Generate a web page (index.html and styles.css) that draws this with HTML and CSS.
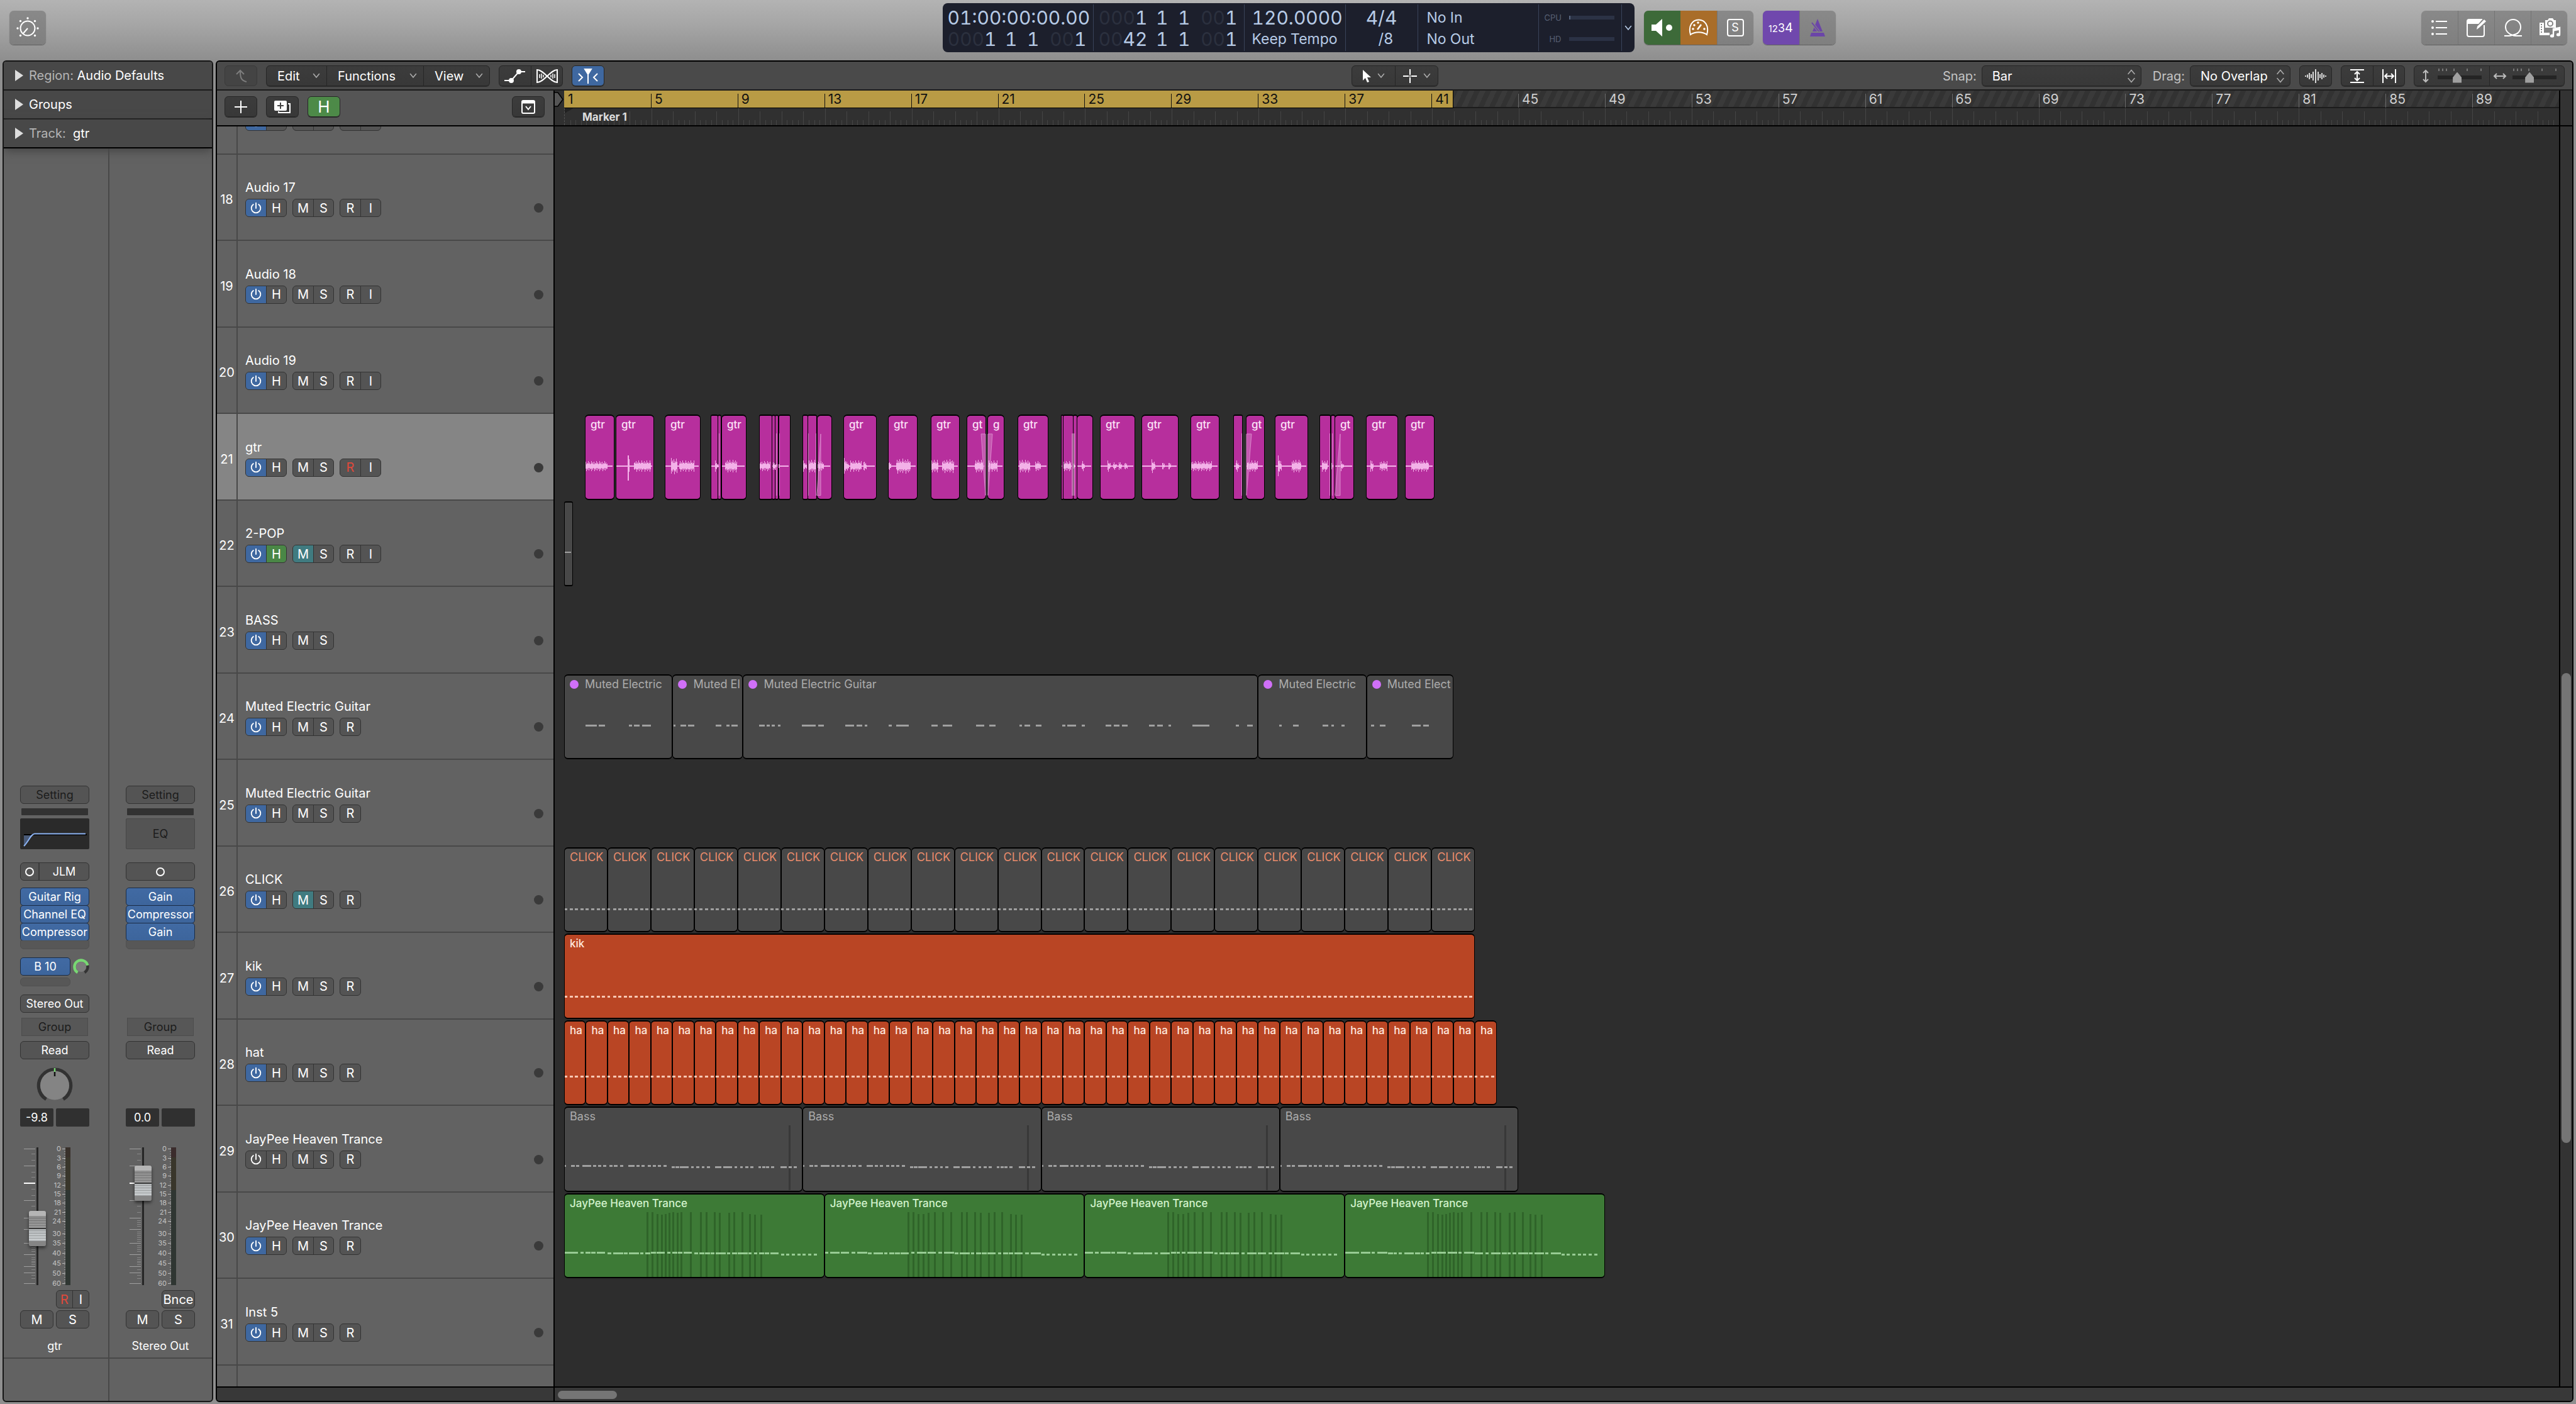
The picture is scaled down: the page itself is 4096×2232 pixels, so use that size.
FILE: index.html
```html
<!DOCTYPE html>
<html lang="en">
<head>
<meta charset="utf-8">
<title>Tracks</title>
<link rel="stylesheet" href="styles.css">
</head>
<body>
<svg class="defs" aria-hidden="true">
  <symbol id="power" viewBox="0 0 18 18"><path d="M9 1.500V9M5.200 3.600a6.600 6.600 0 1 0 7.600 0" fill="none" stroke="currentColor" stroke-width="1.700" stroke-linecap="round"/></symbol>
  <symbol id="chevron" viewBox="0 0 12 9"><path d="M1.500 1.500 6 7l4.500-5.500" fill="none" stroke="currentColor" stroke-width="1.600" stroke-linecap="round"/></symbol>
  <symbol id="updown" viewBox="0 0 14 22"><path d="M2 7.500 7 1.500l5 6M2 14.500l5 6 5-6" fill="none" stroke="currentColor" stroke-width="1.600" stroke-linecap="round"/></symbol>
</svg>

<header class="control-bar">
  <button class="glass single" aria-label="Smart Controls">
    <svg width="40" height="40" viewBox="0 0 40 40" fill="none" stroke="#fff" stroke-width="2"><circle cx="20" cy="21" r="11.500"/><path d="m20 21-7 8"/><g fill="#fff" stroke="none"><circle cx="20" cy="5" r="1.700"/><circle cx="8.500" cy="9.500" r="1.700"/><circle cx="31.500" cy="9.500" r="1.700"/><circle cx="4" cy="21" r="1.700"/><circle cx="36" cy="21" r="1.700"/><circle cx="8.500" cy="32.500" r="1.700"/><circle cx="31.500" cy="32.500" r="1.700"/></g></svg>
  </button>

  <section class="lcd" aria-label="Display">
    <div class="lcd-cell time"><b>01:00:00:00.00</b><p class="position"><span><i>000</i>1</span><span>1</span><span>1</span><span><i>00</i>1</span></p></div>
    <div class="lcd-cell locators"><p class="position"><span><i>000</i>1</span><span>1</span><span>1</span><span><i>00</i>1</span></p><p class="position"><span><i>00</i>42</span><span>1</span><span>1</span><span><i>00</i>1</span></p></div>
    <div class="lcd-cell tempo"><b>120.0000</b><span>Keep Tempo</span></div>
    <div class="lcd-cell meter"><b>4/4</b><span>/8</span></div>
    <div class="lcd-cell midi"><span>No In</span><span>No Out</span></div>
    <div class="lcd-cell load"><p><span>CPU</span><i class="load-bar active"></i></p><p><span>HD</span><i class="load-bar"></i></p></div>
    <button class="lcd-more" aria-label="Display mode"><svg width="12" height="9"><use href="#chevron"/></svg></button>
  </section>

  <div class="bar-right">
    <div class="modes">
      <div class="glass">
        <button class="green" aria-label="Audition"><svg width="36" height="32" viewBox="0 0 36 32" fill="#fff"><path d="M1 11h7L18 2v28L8 21H1z"/><circle cx="29" cy="16" r="5"/></svg></button>
        <button class="orange" aria-label="Tuner"><svg width="32" height="30" viewBox="0 0 32 30" fill="none" stroke="#fff" stroke-width="2"><path d="M3 26C-1 12 6 2.500 16 2.500S33 12 29 26c-7-5-19-5-26 0Z"/><path d="m14 18 6-8" stroke-width="2.600"/><g fill="#fff" stroke="none"><circle cx="7" cy="17" r="1.800"/><circle cx="9" cy="11" r="1.800"/><circle cx="15" cy="7" r="1.800"/><circle cx="25" cy="17" r="1.800"/></g></svg></button>
        <button aria-label="Solo"><span class="boxed">S</span></button>
      </div>
      <div class="glass">
        <button class="purple count" aria-label="Count-in"><span class="n1">1</span><span class="n2">2</span><span class="n3">3</span><span class="n4">4</span></button>
        <button aria-label="Metronome"><svg width="28" height="30" viewBox="0 0 28 30"><path d="M14 1 22 21H6z" fill="#6b45a8"/><path d="m5 7 11 14" stroke="#858585" stroke-width="4"/><path d="m5 7 11 14" stroke="#6b45a8" stroke-width="2"/><path d="M4 23h20l2 6H2z" fill="#6b45a8"/></svg></button>
      </div>
    </div>
    <div class="glass views">
      <button aria-label="List Editors"><svg width="28" height="28" viewBox="0 0 28 28" fill="#fff"><circle cx="3" cy="4" r="2"/><circle cx="3" cy="14" r="2"/><circle cx="3" cy="24" r="2"/><path d="M8 3h18v2H8zM8 13h18v2H8zM8 23h18v2H8z"/></svg></button>
      <button aria-label="Note Pads"><svg width="34" height="32" viewBox="0 0 34 32"><path d="M26 3H5a3 3 0 0 0-3 3v21a3 3 0 0 0 3 3h21a3 3 0 0 0 3-3V12" fill="none" stroke="#fff" stroke-width="2"/><path d="M3 4h22l-5 6H3z" fill="#fff"/><path d="m17 19 1-5L29 3l3 3-11 10z" fill="#fff"/></svg></button>
      <button aria-label="Loop Browser"><svg width="32" height="30" viewBox="0 0 32 30" fill="none" stroke="#fff" stroke-width="2"><path d="M2 28h7c3 0 5-1 7-1.500C22 26 28 21 28 14A12 12 0 0 0 4 14c0 7 6 11 10 12.500 3 1.500 5 1.500 7 1.500h9" /></svg></button>
      <button aria-label="Browsers"><svg width="36" height="34" viewBox="0 0 36 34"><path d="M3 9h6v16h9v4H2V9zM4 11v2h2v-2zm0 4v2h2v-2zm0 4v2h2v-2zm0 4v2h2v-2z" fill="#fff" fill-rule="evenodd"/><path d="M11 5h4l2-3h6l2 3h3v12H11z" fill="#fff"/><circle cx="19" cy="10.500" r="4" fill="none" stroke="#858585" stroke-width="2"/><path d="M24 29V19l10-2v10M24 21.500l10-2" fill="none" stroke="#fff" stroke-width="2.400"/><ellipse cx="22" cy="30" rx="3.200" ry="2.600" fill="#fff"/><ellipse cx="32" cy="28" rx="3.200" ry="2.600" fill="#fff"/></svg></button>
    </div>
  </div>
</header>

<div class="workspace">
  <aside class="inspector">
    <button class="section-head"><i class="tri"></i><span>Region:</span> Audio Defaults</button>
    <button class="section-head"><i class="tri"></i>Groups</button>
    <button class="section-head last"><i class="tri"></i><span>Track:</span> &nbsp;gtr</button>
    <div class="strips">
      <section class="strip">
        <div class="strip-body">
          <button class="pill off">Setting</button>
          <i class="gain"></i>
          <button class="eq curve" aria-label="EQ"><svg width="110" height="49" viewBox="0 0 110 49"><path d="M6 26h100" stroke="#000" stroke-width="2"/><path d="M6 27h12L6 44z" fill="#4a5b78"/><path d="M6 44C14 36 17 25 23 24.500H104" fill="none" stroke="#8db4f4" stroke-width="2"/></svg></button>
          <div class="pill input"><button aria-label="Format"><i class="ring"></i></button><button>JLM</button></div>
          <div class="inserts"><button>Guitar Rig</button><button>Channel EQ</button><button>Compressor</button><i></i></div>
          <div class="sends"><button class="send">B 10</button><svg width="26" height="26" viewBox="0 0 26 26"><path d="M23.200 10.500A10.500 10.500 0 0 1 18.500 22" fill="none" stroke="#333" stroke-width="4.500"/><path d="M7.500 22A10.500 10.500 0 1 1 23.200 10.800" fill="none" stroke="#78d873" stroke-width="4.500"/><circle cx="13" cy="13" r="8" fill="#7c7c7c"/></svg><i></i></div>
          <button class="pill out">Stereo Out</button>
          <button class="group">Group</button>
          <button class="pill mode">Read</button>
          <div class="pan"><svg width="58" height="56" viewBox="0 0 58 56"><path d="M15.500 51.500A25.500 25.500 0 1 1 42.500 51.500" fill="none" stroke="#323232" stroke-width="5.500"/><circle cx="29" cy="29.500" r="23" fill="#848484"/><path d="M29 2v6" stroke="#78d873" stroke-width="2.500"/><path d="M29 8v7" stroke="#111" stroke-width="2.500"/></svg></div>
          <div class="values"><output>-9.8</output><output></output></div>
          <div class="fader" data-level="38" data-name="gtr volume" data-tip="#38302a"></div>
          <div class="row rec"><div class="pill split"><button class="red">R</button><button>I</button></div></div>
          <div class="row ms"><button class="pill">M</button><button class="pill">S</button></div>
          <p class="strip-name">gtr</p>
        </div>
        <div class="strip-foot"></div>
      </section>
      <section class="strip">
        <div class="strip-body">
          <button class="pill off">Setting</button>
          <i class="gain"></i>
          <button class="eq">EQ</button>
          <button class="pill input" aria-label="Stereo format"><i class="ring"></i></button>
          <div class="inserts"><button>Gain</button><button>Compressor</button><button>Gain</button><i></i></div>
          <div class="sends"></div>
          <div class="out"></div>
          <button class="group">Group</button>
          <button class="pill mode">Read</button>
          <div class="pan"></div>
          <div class="values"><output>0.0</output><output></output></div>
          <div class="fader" data-level="82" data-name="Stereo Out volume" data-tip="#3b2c2c"></div>
          <div class="row rec"><button class="pill">Bnce</button></div>
          <div class="row ms"><button class="pill">M</button><button class="pill">S</button></div>
          <p class="strip-name">Stereo Out</p>
        </div>
        <div class="strip-foot"></div>
      </section>
    </div>
  </aside>

  <main class="tracks-window">
    <div class="menu-bar">
      <div class="cluster">
        <div class="ctl faint"><button class="icon" aria-label="Back"><svg width="22" height="24" viewBox="0 0 22 24" fill="none" stroke="#7d7d7d" stroke-width="2"><path d="M4 9 10 3l6 6M10 4c0 10 1 15 10 17"/></svg></button></div>
        <div class="ctl menus"><button class="edit">Edit <svg width="12" height="9"><use href="#chevron"/></svg></button><button class="functions">Functions <svg width="12" height="9"><use href="#chevron"/></svg></button><button class="view">View <svg width="12" height="9"><use href="#chevron"/></svg></button></div>
        <div class="ctl">
          <button class="icon" aria-label="Automation"><svg width="38" height="24" viewBox="0 0 38 24" fill="#fff" stroke="#fff" stroke-width="2"><path d="M2 19h11L25 5h10" fill="none"/><circle cx="13" cy="19" r="3"/><circle cx="25" cy="5" r="3"/></svg></button>
          <button class="icon" aria-label="Flex"><svg width="38" height="24" viewBox="0 0 38 24" fill="none" stroke="#fff" stroke-width="2"><path d="M3 2C14 2 24 22 35 22V2C24 2 14 22 3 22z"/><path d="M7 9v6M10 8v8M13 10v4M31 9v6M28 8v8M25 10v4" stroke-width="1.500"/></svg></button>
        </div>
        <div class="ctl"><button class="icon blue" aria-label="Catch Playhead"><svg width="36" height="26" viewBox="0 0 36 26" fill="none" stroke="#fff" stroke-width="2"><path d="M13 2h10l-5 8z" fill="#fff"/><path d="M18 8v17M3 9l6 6-6 6M33 9l-6 6 6 6"/></svg></button></div>
      </div>
      <div class="ctl">
        <button class="tool" aria-label="Pointer Tool"><svg width="16" height="22" viewBox="0 0 16 22" fill="#fff"><path d="M2 1v17l4-4 3 7 3-1-3-7h6z"/></svg><svg class="dim" width="12" height="9"><use href="#chevron"/></svg></button>
        <button class="tool" aria-label="Marquee Tool"><svg width="24" height="24" viewBox="0 0 24 24" stroke="#fff" stroke-width="2"><path d="M12 1v9M12 14v9M1 12h9M14 12h9M11 12h2"/></svg><svg class="dim" width="12" height="9"><use href="#chevron"/></svg></button>
      </div>
      <div class="cluster end">
        <label for="snap">Snap:</label>
        <div class="ctl pick snap"><select id="snap"><option>Bar</option></select><svg width="14" height="22"><use href="#updown"/></svg></div>
        <label for="drag" class="drag-label">Drag:</label>
        <div class="ctl pick drag"><select id="drag"><option>No Overlap</option></select><svg width="14" height="22"><use href="#updown"/></svg></div>
        <div class="ctl"><button class="icon" aria-label="Waveform Zoom"><svg width="36" height="24" viewBox="0 0 36 24" stroke="#fff" stroke-width="1.600"><path d="M2 11v2M5 9.500v5M8 7v10M11 9v6M14 5v14M18 1v22M22 5v14M25 9v6M28 7v10M31 9.500v5M34 11v2"/></svg></button></div>
        <div class="ctl">
          <button class="icon" aria-label="Fit Vertically"><svg width="24" height="24" viewBox="0 0 24 24" fill="none" stroke="#fff" stroke-width="2"><path d="M1 2h22M1 22h22M12 5v14M8 9l4-4 4 4M8 15l4 4 4-4"/></svg></button>
          <button class="icon" aria-label="Fit Horizontally"><svg width="24" height="24" viewBox="0 0 24 24" fill="none" stroke="#fff" stroke-width="2"><path d="M2 1v22M22 1v22M5 12h14M9 8l-4 4 4 4M15 8l4 4-4 4"/></svg></button>
        </div>
        <div class="ctl">
          <label class="zoom" aria-label="Vertical Zoom"><svg width="12" height="22" viewBox="0 0 12 22" fill="none" stroke="#bbb" stroke-width="2"><path d="M6 2v18M2 6l4-4 4 4M2 16l4 4 4-4"/></svg><span class="zoom-range"><svg width="70" height="4" viewBox="0 0 70 4" stroke="#777" stroke-width="2"><path d="M2 0v4M8 0v4M14 0v4M26 0v4M47 0v4M69 0v4"/></svg><input type="range" min="0" max="100" value="43"></span></label>
          <label class="zoom" aria-label="Horizontal Zoom"><svg width="22" height="12" viewBox="0 0 22 12" fill="none" stroke="#bbb" stroke-width="2"><path d="M2 6h18M6 2 2 6l4 4M16 2l4 4-4 4"/></svg><span class="zoom-range"><svg width="70" height="4" viewBox="0 0 70 4" stroke="#777" stroke-width="2"><path d="M2 0v4M8 0v4M14 0v4M26 0v4M47 0v4M69 0v4"/></svg><input type="range" min="0" max="100" value="36"></span></label>
        </div>
      </div>
    </div>

    <div class="head-bar">
      <div class="ctl"><button class="icon" aria-label="New Track"><svg width="20" height="20" viewBox="0 0 20 20" stroke="#fff" stroke-width="2"><path d="M10 0v20M0 10h20"/></svg></button></div>
      <div class="ctl"><button class="icon" aria-label="Duplicate Track"><svg width="28" height="22" viewBox="0 0 28 22"><path d="M23 6h3v14H8v-2" fill="none" stroke="#fff" stroke-width="2"/><rect x="1" y="1" width="20" height="16" rx="2" fill="#fff"/><path d="M11 4v10M6 9h10" stroke="#444" stroke-width="2"/></svg></button></div>
      <div class="ctl"><button class="icon hide">H</button></div>
      <div class="ctl config"><button class="icon" aria-label="Track Header Setup"><svg width="24" height="22" viewBox="0 0 24 22" fill="none" stroke="#fff" stroke-width="2"><rect x="2" y="1" width="20" height="20" rx="2"/><path d="M3 3.500h18" stroke-width="4"/><path d="m8 10 4 5 4-5"/></svg></button></div>
    </div>

    <div class="ruler">
      <svg class="playhead" width="14" height="24" viewBox="0 0 14 24"><path d="M-2 1h7l8 11-8 11h-7z" fill="#555" stroke="#000" stroke-width="1.500"/></svg>
      <div class="bars" id="bars"><div class="cycle" id="cycle"></div></div>
      <div class="markers" id="markers"><span>Marker 1</span></div>
    </div>
    <div class="ruler-end"></div>

    <div class="headers" id="headers"></div>
    <div class="lanes" id="lanes"></div>
    <div class="v-scroll"><i></i></div>
    <div class="scroll-corner"></div>
    <div class="h-scroll"><i></i></div>
  </main>
</div>
<script src="app.js"></script>
</body>
</html>
```
FILE: styles.css
```css
* { box-sizing: border-box; margin: 0; padding: 0; }
html, body { height: 100%; }
body {
  display: flex; flex-direction: column; overflow: hidden;
  background: #8f8f8f; color: #fff;
  font: 400 20px/24px Inter, "Liberation Sans", sans-serif;
}
button, select, input { font: inherit; color: inherit; border: 0; background: none; }
button { display: flex; align-items: center; justify-content: center; }
i { font-style: normal; }
svg { display: block; flex: none; }
.defs { position: absolute; width: 0; height: 0; }

/* Control bar */
.control-bar {
  flex: none; height: 96px; padding: 0 14px 8px 15px;
  display: grid; grid-template-columns: 1fr auto 1fr; align-items: center;
  background: linear-gradient(#b3b3b3, #a6a6a6 40%, #8e8e8e);
}
.glass {
  display: flex; height: 54px; border-radius: 7px; overflow: hidden;
  background: linear-gradient(#898989, #7f7f7f); box-shadow: 0 1px 1px #5c5c5c;
}
.glass.single, .glass button { width: 58px; }
.glass button + button { border-left: 1px solid #747474; }
.glass .green { background: #3d6a39; }
.glass .orange { background: #a96d29; border-color: #a96d29; }
.glass .purple { background: #7048ad; }
.boxed { width: 27px; height: 28px; border: 2px solid #fff; border-radius: 4px; font-size: 18px; line-height: 24px; }
.count { align-items: baseline; line-height: 54px; }
.n1 { font-size: 14px; } .n2 { font-size: 15px; } .n3 { font-size: 18px; } .n4 { font-size: 20px; }
.bar-right, .modes { display: flex; }
.bar-right { justify-content: space-between; padding-left: 15px; }
.modes { gap: 15px; }
.lcd {
  display: flex; height: 78px; border-radius: 8px; padding: 2px 0;
  background: #1c1f2c; color: #b7cbe6; font-size: 30px; font-variant-numeric: tabular-nums;
}
.lcd-cell {
  display: flex; flex-direction: column; justify-content: space-between;
  border-right: 1px solid #39435a; padding: 5px 0 3px; line-height: 32px; white-space: nowrap;
}
.lcd b { font-weight: 400; }
.lcd-cell i { color: #2b303e; }
.time, .locators { width: 240px; padding-left: 8px; }
.position { display: grid; grid-template-columns: 78px 33px 35px 75px; text-align: right; }
.tempo { width: 161px; padding-left: 12px; }
.tempo span, .midi span { font-size: 23px; }
.meter span { font-size: 24px; }
.meter { width: 115px; align-items: center; }
.meter span { padding-left: 14px; }
.midi { width: 192px; padding-left: 14px; }
.load { width: 132px; padding: 5px 11px 3px 9px; font-size: 13px; color: #586074; }
.load p { display: flex; align-items: center; justify-content: flex-end; gap: 12px; }
.lcd-cell .load-bar { width: 72px; height: 6px; background: #2b3245; }
.lcd-cell .load-bar.active { border-left: 2px solid #586680; }
.lcd-more { width: 20px; }

/* Window frame */
.workspace { flex: 1; min-height: 0; display: flex; gap: 4px; padding: 0 4px 3px; }
.inspector { flex: none; width: 335px; border: 2px solid #161616; border-radius: 6px; overflow: hidden; display: flex; flex-direction: column; background: #626262; }
.section-head {
  flex: none; width: 100%; height: 46px; padding: 0 18px; justify-content: flex-start;
  background: #484848; border-bottom: 2px solid #1b1b1b; white-space: pre;
}
.section-head.last { border-color: #000; box-shadow: 0 4px 14px #444; }
.section-head span { color: #b5b5b5; }
.tri { border-left: 13px solid #ddd; border-top: 9px solid transparent; border-bottom: 9px solid transparent; margin-right: 9px; }

/* Channel strips */
.strips { flex: 1; display: flex; }
.strip { width: 166px; display: flex; flex-direction: column; justify-content: flex-end; }
.strip + .strip { width: auto; flex: 1; border-left: 2px solid #484848; }
.strip-body { width: 110px; margin: 0 0 6px 26px; display: flex; flex-direction: column; font-size: 18px; }
.strip-body > * { flex: none; }
.strip-foot { height: 69px; border-top: 2px solid #484848; }
.pill, .send { height: 29px; border: 1px solid #333; border-radius: 6px; background: #545454; white-space: nowrap; }
.off, .group, .eq { color: #1c1c1c; }
.gain { height: 11px; margin: 7px 2px 0; background: #323232; border-radius: 1px; }
.eq { height: 49px; margin-top: 5px; background: #545454; border: 1px solid #474747; border-radius: 2px; }
.eq.curve { background: #2a2a2a; border: 0; }
.input { margin-top: 21px; display: flex; }
.input button { height: 100%; flex: 1; }
.input button:first-child { flex: none; width: 30px; border-right: 2px solid #3b3b3b; }
.ring { width: 14px; height: 14px; border: 2px solid #fff; border-radius: 50%; }
.inserts { height: 96px; margin-top: 11px; }
.inserts button, .send { width: 100%; background: linear-gradient(#416aa3, #3d659c); border: 1px solid #1a2b44; border-radius: 5px; white-space: nowrap; }
.inserts button { height: 29px; margin-bottom: -1px; }
.inserts i, .sends i { display: block; height: 14px; border: 1px solid #505050; border-radius: 0 0 6px 6px; background: #575757; }
.sends { height: 46px; margin-top: 15px; display: grid; grid-template-columns: 80px 26px; column-gap: 4px; row-gap: 3px; align-items: center; }
.sends i { border-radius: 6px; }
.out { height: 29px; margin-top: 13px; }
.group { height: 29px; margin: 8px 2px 0; background: #575757; border: 1px solid #4c4c4c; }
.mode { margin-top: 8px; }
.pan { height: 53px; margin-top: 12px; display: flex; justify-content: center; }
.values { margin-top: 13px; display: flex; gap: 4px; }
.values output { flex: 1; height: 29px; line-height: 29px; text-align: center; background: #303030; border-radius: 2px; }
.fader { position: relative; height: 219px; margin-top: 33px; font-size: 11px; }
.fader svg { overflow: visible; }
.fader text { fill: #c4c4c4; text-anchor: end; }
.fader input {
  position: absolute; left: 14px; top: 0; width: 27px; height: 219px;
  appearance: none; writing-mode: vertical-lr; direction: rtl;
}
.fader input::-webkit-slider-thumb {
  appearance: none; width: 27px; height: 56px; border-radius: 3px;
  background:
    linear-gradient(transparent 27px, #3a3a3a 27px 29px, transparent 29px),
    linear-gradient(#b5b5b5 8px, transparent 8px 48px, #858585 48px),
    repeating-linear-gradient(#0000 0 3px, #0003 3px 4px),
    linear-gradient(#888, #999 48%, #b8bcbe 52%, #d0d4d6);
  box-shadow: 0 3px 5px #0008;
}
.row { display: flex; gap: 4px; }
.row .pill { width: 53px; font-size: 20px; }
.rec { margin-top: 8px; justify-content: flex-end; }
.split { display: flex; }
.split button { flex: 1; height: 100%; }
.split button + button { border-left: 1px solid #333; }
.ms { margin-top: 3px; }
.strip-name { margin-top: 16px; text-align: center; white-space: nowrap; }
.red { color: #e0493b; }

/* Tracks window */
.tracks-window {
  flex: 1; min-width: 0; border: 2px solid #000; border-radius: 6px; overflow: hidden; background: #2d2d2d;
  display: grid; grid-template-columns: 537px 1fr 21px; grid-template-rows: 46px 57px minmax(0, 1fr) 23px;
}
.menu-bar {
  grid-column: 1 / -1; display: grid; grid-template-columns: 1fr auto 1fr; align-items: center;
  padding: 1px 12px 0; background: #4a4a4a; border-bottom: 2px solid #1b1b1b;
}
.cluster { display: flex; align-items: center; gap: 14px; }
.cluster.end { justify-content: flex-end; }
.cluster.end label { color: #c4c4c4; }
.cluster .pick { margin-left: -6px; }
.cluster .drag-label { margin-left: 4px; }
.ctl {
  display: flex; height: 33px; border-radius: 6px; overflow: hidden; border: 1px solid #262626;
  background: linear-gradient(#3c3c3c, #383838); box-shadow: 0 1px 0 #2b2b2b;
}
.ctl > * + * { border-left: 1px solid #262626; }
.ctl.faint { background: #444; border-color: #3a3a3a; box-shadow: none; }
.icon { width: 50px; }
.menus button { justify-content: space-between; padding: 0 10px 0 17px; }
.edit { width: 95px; }
.functions { width: 154px; }
.view { width: 105px; }
.menus svg, .dim, .pick svg { color: #aaa; }
.blue { background: #3f68a0; }
.tool { width: 68px; gap: 9px; }
.pick { position: relative; }
.pick select { width: 100%; height: 31px; padding-left: 16px; appearance: none; }
.ctl.pick svg { position: absolute; right: 8px; top: 5px; border: 0; }
.snap { width: 254px; }
.drag { width: 160px; }
.zoom { display: flex; align-items: center; justify-content: space-between; width: 119px; padding: 0 12px; }
.zoom:last-child { padding-left: 5px; }
.zoom-range { width: 70px; }
.zoom-range svg { margin-bottom: 1px; }
.zoom input { display: block; width: 70px; height: 18px; appearance: none; background: linear-gradient(#0000 6px, #242424 6px 12px, #0000 12px); }
.zoom input::-webkit-slider-thumb { appearance: none; width: 14px; height: 17px; background: #a0a0a0; clip-path: polygon(50% 0, 100% 50%, 100% 100%, 0 100%, 0 50%); }

.head-bar {
  display: flex; align-items: center; gap: 14px; padding: 0 14px 4px 12px;
  background: #555; border-right: 2px solid #000; border-bottom: 2px solid #000;
}
.config { margin-left: auto; }
.hide { background: #4d8a48; font-size: 26px; }
.ruler { position: relative; padding-left: 15px; background: #303030; border-bottom: 2px solid #000; overflow: hidden; }
.ruler-end, .v-scroll { border-left: 2px solid #000; background: #333; }
.ruler-end { border-bottom: 2px solid #000; }
.playhead { position: absolute; left: 0; top: 2px; }
.bars {
  position: relative; height: 28px; border-bottom: 2px solid #1c1c1c;
  background: repeating-linear-gradient(115deg, #323232 0 8px, #3a3a3a 8px 16px);
}
.cycle { position: absolute; top: 0; left: 0; height: 28px; background: #b99b45; border-bottom: 1px solid #000; border-right: 1px solid #000; }
.bar-no { position: absolute; top: 5px; height: 22px; padding-left: 5px; border-left: 1px solid #6a6a6a; color: #d0d0d0; font-size: 21px; line-height: 17px; }
.bar-no.in { color: #111; border-color: #111; }
.bar-no.in:nth-child(2) { border-color: transparent; }
.markers { position: relative; height: 27px; border-left: 1px dashed #555; }
.markers svg { position: absolute; inset: 0; width: 100%; height: 28px; }
.markers span { position: relative; display: block; padding: 2px 0 0 28px; font-size: 17px; font-weight: 700; color: #ddd; }

.headers, .lanes { display: grid; grid-template-rows: 446fr repeat(14, 1376fr) 330fr; min-height: 0; }
.headers { border-right: 2px solid #000; background: #626262; }
.track { min-height: 0; overflow: hidden; display: flex; align-items: flex-end; border-bottom: 2px solid #484848; }
.track.selected { background: #858585; }
.track:last-child { border-bottom: 0; }
.track-no { flex: none; align-self: stretch; width: 33px; display: flex; align-items: flex-end; justify-content: center; padding-bottom: 52px; border-right: 2px solid #484848; }
.track-main { padding: 0 0 36px 12px; }
.track-name { margin-bottom: 6px; white-space: nowrap; }
.groups { display: flex; gap: 9px; }
.seg { display: flex; height: 29px; border: 1px solid #333; border-radius: 6px; overflow: hidden; background: #545454; }
.seg button { width: 32px; height: 100%; }
.seg button + button { border-left: 1px solid #333; }
.seg .on-power { background: #3f68a0; }
.seg .on-hide { background: #4a8746; }
.seg .on-mute { background: #407b80; }
.dot { width: 15px; height: 15px; border-radius: 50%; background: #3a3a3a; margin: 0 16px 43px auto; }

/* Regions */
.lanes { padding-left: 15px; }
.lane { position: relative; min-height: 0; }
.clip {
  position: absolute; top: 1px; bottom: 1px; overflow: hidden; border: solid #000; border-width: 2px 1px;
  border-radius: 6px; padding: 4px 0 0 8px; font-size: 17px; line-height: 20px; white-space: nowrap;
  display: flex; align-items: flex-start; gap: 10px; font-weight: 500;
}
.clip.narrow { border-radius: 3px; padding: 0; }
.clip::before { display: none; content: ""; width: 14px; height: 14px; border-radius: 50%; background: #d070f8; margin-top: 3px; flex: none; }
.clip.guitar::before { display: block; }
.magenta { background: #b72f9d; color: #fbe0f6; }
.gray, .guitar { background: #484848; color: #acacac; font-size: 18px; font-weight: 400; }
.click { background: #484848; color: #ea8c6c; font-size: 18px; font-weight: 400; }
.orange-clip { background: #b94524; color: #ffe8de; }
.green-clip { background: #3d7a36; color: #d3f3cd; }
.lane svg { position: absolute; inset: 0; width: 100%; height: 100%; pointer-events: none; }

.v-scroll { position: relative; }
.v-scroll i { position: absolute; left: 2px; top: 43.4%; width: 15px; height: 37.3%; border-radius: 8px; background: #757575; }
.scroll-corner, .h-scroll { background: #383838; border-top: 2px solid #000; }
.scroll-corner { border-right: 2px solid #000; }
.h-scroll { grid-column: 2 / -1; padding: 5px 0 0 5px; }
.h-scroll i { display: block; width: 94px; height: 13px; border-radius: 7px; background: #757575; }
```
FILE: app.js
```js
// Timeline: 92 bars are visible; positions are in units, 3172 to the full width.
const BARS = 92, UNITS = 3172, BAR = UNITS / BARS;
const pct = u => (u / UNITS * 100) + '%';
const el = (tag, cls, parent, html) => {
  const e = document.createElement(tag);
  if (cls) e.className = cls;
  if (html !== undefined) e.innerHTML = html;
  parent.append(e);
  return e;
};
const rect = (x, y, w, h, fill) => `<rect x="${x}" y="${y}" width="${w}" height="${h}" fill="${fill}"/>`;

// Ruler
const bars = document.getElementById('bars');
document.getElementById('cycle').style.width = pct(41 * BAR);
for (let b = 1; b < 92; b += 4) {
  const n = el('span', 'bar-no' + (b < 42 ? ' in' : ''), bars, b);
  n.style.left = pct((b - 1) * BAR);
}
let ticks = '<path d="M0 8V0h14z" fill="#222"/>';
for (let i = 1; i < BARS * 4; i++) {
  const y = i % 16 === 0 ? 0 : i % 4 === 0 ? 5 : 19;
  ticks += rect(Math.round(i * BAR / 4), y, 1, 28 - y, '#454545');
}
document.getElementById('markers').insertAdjacentHTML('afterbegin',
  `<svg viewBox="0 0 ${UNITS} 28" preserveAspectRatio="none" shape-rendering="crispEdges">${ticks}</svg>`);

// Track headers: [number, name, buttons, active flags]; the first is scrolled almost out of view
const tracks = [
  [17, '', 'PHMSRI', 'P'], [18, 'Audio 17', 'PHMSRI', 'P'], [19, 'Audio 18', 'PHMSRI', 'P'],
  [20, 'Audio 19', 'PHMSRI', 'P'], [21, 'gtr', 'PHMSRI', 'PR'], [22, '2-POP', 'PHMSRI', 'PHM'],
  [23, 'BASS', 'PHMS', 'P'], [24, 'Muted Electric Guitar', 'PHMSR', 'P'],
  [25, 'Muted Electric Guitar', 'PHMSR', 'P'], [26, 'CLICK', 'PHMSR', 'PM'], [27, 'kik', 'PHMSR', 'P'],
  [28, 'hat', 'PHMSR', 'P'], [29, 'JayPee Heaven Trance', 'PHMSR', ''],
  [30, 'JayPee Heaven Trance', 'PHMSR', 'P'], [31, 'Inst 5', 'PHMSR', 'P'],
];
const onClass = { P: 'on-power', H: 'on-hide', M: 'on-mute', R: 'red' };
const headers = document.getElementById('headers');
const lanesEl = document.getElementById('lanes');
const lanes = {};
for (const [no, name, buttons, on] of tracks) {
  const t = el('article', 'track' + (no === 21 ? ' selected' : ''), headers);
  el('span', 'track-no', t, name ? no : '');
  const m = el('div', 'track-main', t);
  if (name) el('p', 'track-name', m, name);
  const g = el('div', 'groups', m);
  for (let i = 0; i < buttons.length; i += 2) {
    const seg = el('div', 'seg', g);
    for (const k of buttons.slice(i, i + 2)) {
      const b = el('button', on.includes(k) ? onClass[k] : '', seg,
        k === 'P' ? '<svg width="20" height="20"><use href="#power"/></svg>' : name ? k : '');
      if (k === 'P') b.setAttribute('aria-label', 'Track On');
    }
  }
  if (name) el('i', 'dot', t);
  lanes[no] = el('div', 'lane', lanesEl);
}
el('span', 'track-no', el('article', 'track', headers), '');
el('div', 'lane', lanesEl);

// Regions
function clip(no, a, b, cls, label) {
  const c = el('div', 'clip ' + cls + (b - a < 22 ? ' narrow' : ''), lanes[no], label || '');
  c.style.left = pct(a);
  c.style.width = pct(b - a);
}
function overlay(no, shapes) {
  lanes[no].insertAdjacentHTML('beforeend',
    `<svg viewBox="0 0 ${UNITS} 138" preserveAspectRatio="none" shape-rendering="crispEdges">${shapes}</svg>`);
}

const guitarTakes = [
  [33, 80, 'gtr'], [82, 143, 'gtr'], [160, 217, 'gtr'], [233, 245], [244, 250], [250, 290, 'gtr'],
  [310, 331], [330, 336], [335, 341], [341, 360], [379, 388], [387, 402], [402, 426],
  [444, 497, 'gtr'], [515, 562, 'gtr'], [583, 629, 'gtr'], [640, 671, 'gt'], [673, 700, 'g'],
  [721, 770, 'gtr'], [790, 794], [793, 810], [809, 816], [815, 841], [852, 908, 'gtr'],
  [918, 977, 'gtr'], [996, 1042, 'gtr'], [1064, 1079], [1084, 1114, 'gt'], [1130, 1183, 'gtr'],
  [1201, 1219], [1219, 1226], [1225, 1256, 'gt'], [1275, 1326, 'gtr'], [1337, 1384, 'gtr'],
];
const bursts = [
  [34, 69, 8], [111, 138, 9], [170, 180, 13], [183, 207, 9], [240, 245, 9], [256, 275, 10],
  [311, 328, 8], [332, 339, 8], [341, 344, 5], [380, 386, 9], [388, 400, 10], [403, 413, 8],
  [445, 453, 13], [455, 473, 9], [476, 481, 11], [516, 520, 10], [528, 551, 12], [584, 595, 10],
  [601, 620, 11], [653, 667, 10], [675, 689, 9], [724, 741, 10], [749, 758, 8], [794, 806, 8],
  [810, 813, 4], [823, 828, 11], [864, 869, 11], [873, 879, 8], [882, 887, 9], [891, 896, 8],
  [934, 940, 13], [951, 955, 9], [961, 965, 9], [997, 1030, 8], [1068, 1073, 12], [1086, 1103, 9],
  [1135, 1141, 17], [1157, 1172, 10], [1205, 1214, 9], [1220, 1223, 5], [1235, 1240, 8],
  [1282, 1287, 13], [1297, 1309, 8], [1347, 1375, 9],
];
const PINK = '#f3b1e8', jitter = [1, .5, .7, .4, .85, .4, .65, .45, .95, .5, .7, .4, .55];
let wave = '';
for (const [a, b, label] of guitarTakes) {
  clip(21, a, b, 'magenta', label);
  wave += rect(a + 1, 82, Math.max(b - a - 4, 1), 2, PINK);
}
for (const [a, b, amp] of bursts) {
  for (let x = a, k = a % 5; x < b; x++, k++) {
    const decay = b - a < 9 ? 1 - (x - a) / (b - a) * .7 : 1;
    const up = Math.round(amp * jitter[k % 13] * decay), down = Math.round(amp * jitter[(k + 8) % 13] * decay);
    wave += rect(x, 83 - up, 1, up + down, PINK);
  }
}
wave += rect(101, 66, 2, 40, PINK) + rect(103, 72, 1, 20, PINK);
for (const x of [246, 337, 342, 388, 400, 1077, 1217, 1221]) wave += rect(x, 31, 1, 99, '#d985cb');
wave += rect(807, 31, 5, 99, '#ffffff55');
for (const p of ['402,130 408,32 408,130', '663,32 670,32 670,130', '674,130 674,32 681,32', '1085,130 1085,32 1093,32', '1226,130 1234,32 1234,130'])
  wave += `<polygon points="${p}" fill="#ffffff33" stroke="#d985cb"/>`;
overlay(21, wave);

clip(22, 0, 14, 'gray');
overlay(22, rect(1, 81, 10, 2, '#a0a0a0'));

const NOTE = '#a0a0a0';
clip(24, 0, 5 * BAR, 'guitar', 'Muted Electric');
clip(24, 5 * BAR, 8.25 * BAR, 'guitar', 'Muted El');
clip(24, 8.25 * BAR, 32 * BAR, 'guitar', 'Muted Electric Guitar');
clip(24, 32 * BAR, 37 * BAR, 'guitar', 'Muted Electric');
clip(24, 37 * BAR, 41 * BAR, 'guitar', 'Muted Elect');
const riff = [
  34, 52, 55, 65, 103, 108, 111, 120, 124, 138, 174, 177, 185, 194, 197, 207, 241, 250, 258, 263, 266, 276,
  310, 319, 322, 327, 330, 335, 340, 344, 378, 400, 404, 413, 447, 461, 465, 474, 478, 482, 516, 521, 528, 548,
  584, 594, 602, 617, 655, 668, 676, 686, 724, 728, 732, 741, 750, 759, 792, 797, 800, 814, 823, 828,
  861, 870, 874, 883, 887, 896, 930, 939, 943, 952, 961, 965, 999, 1026, 1068, 1073, 1086, 1095,
  1137, 1141, 1159, 1168, 1206, 1215, 1220, 1224, 1236, 1241, 1283, 1288, 1297, 1306, 1348, 1362, 1366, 1375,
];
const pairs = (list, y, fill, shift = 0) => {
  let s = '';
  for (let i = 0; i < list.length; i += 2) s += rect(list[i] + shift, y, list[i + 1] - list[i], 3, fill);
  return s;
};
overlay(24, pairs(riff, 81, NOTE));

const pulse = (count, y, fill) => {
  let s = '';
  for (let i = 0; i < count * 4; i++) s += rect(Math.round(i * BAR / 4) + (i ? 0 : 1), y, i % 8 ? 5 : 4, 3, fill);
  return s;
};
for (let b = 0; b < 42; b += 2) clip(26, b * BAR, (b + 2) * BAR, 'click', 'CLICK');
overlay(26, pulse(42, 98, NOTE));
clip(27, 0, 42 * BAR, 'orange-clip', 'kik');
overlay(27, pulse(42, 100, '#f8c7b3'));
for (let b = 0; b < 43; b++) clip(28, b * BAR, (b + 1) * BAR, 'orange-clip', 'ha');
overlay(28, pulse(43, 89, '#f8c7b3'));

const bassHigh = [1, 3, 11, 17, 19, 24, 29, 43, 46, 51, 54, 59, 62, 67, 72, 77, 79, 85, 89, 94, 102, 112, 115, 120, 123, 128, 133, 138, 141, 146, 149, 154, 158, 163];
const bassLow = [171, 176, 177, 183, 184, 198, 202, 206, 210, 215, 219, 223, 227, 232, 240, 250, 253, 267, 271, 275, 280, 284, 288, 293, 296, 301, 309, 313, 315, 320, 321, 326, 329, 334, 344, 354, 357, 362, 365, 370];
let bass = '';
for (let i = 0; i < 4; i++) {
  const x = Math.round(i * 11 * BAR);
  clip(29, i * 11 * BAR, (i + 1) * 11 * BAR, 'gray', 'Bass');
  bass += rect(x + 357, 31, 3, 103, '#383838') + pairs(bassHigh, 94, NOTE, x) + pairs(bassLow, 96, NOTE, x);
}
overlay(29, bass);

// Controller bars as [x, top], then the melody in steps of a quarter bar
const sweepA = [[131, 31], [139, 31], [147, 34], [154, 35], [160, 34], [166, 32], [172, 31], [179, 32], [185, 31], [200, 31], [216, 31], [225, 31], [238, 31], [246, 32], [261, 32], [269, 31], [282, 31], [294, 34], [302, 35], [312, 35]];
const sweepB = [[132, 31], [140, 31], [148, 34], [156, 34], [164, 32], [174, 31], [187, 31], [200, 31], [217, 31], [225, 31], [238, 31], [247, 32], [260, 32], [269, 31], [281, 31], [295, 34], [303, 35], [312, 35]];
const widths = [8, 8, 5, 5, 8, 7, 8, 5, 6, 8, 8, 6, 9, 7, 5, 8];
let lead = '';
for (let i = 0; i < 4; i++) {
  const x = Math.round(i * 12 * BAR);
  clip(30, i * 12 * BAR, (i + 1) * 12 * BAR, 'green-clip', 'JayPee Heaven Trance');
  for (const [sx, top] of i % 3 ? sweepB : sweepA) lead += rect(x + sx, top, 3, 134 - top, '#2f6429');
  for (let s = 0; s < 47; s++) {
    const y = s < 8 ? 94 : s < 16 ? 95 : s < 24 ? 94 : s < 40 ? 95 : 97;
    lead += rect(x + Math.round(s * BAR / 4) + (s ? 0 : 1), y, s < 40 ? widths[(s + i * 3) % 16] : 5, 3, '#97cb93');
  }
}
overlay(30, lead);

// Channel faders with their scales
const long = [2, 29, 84, 112, 130, 152, 170, 189, 199, 216];
const short = [10, 20, 39, 47, 66, 76, 93, 103, 116, 119, 122, 125, 134, 137, 140, 143, 146, 149, 156, 159, 162, 165, 175, 178, 181, 183, 186, 194, 203, 208];
const scale = [[0, 2], [3, 17], [6, 31], [9, 45], [12, 60], [15, 74], [18, 88], [21, 103], [24, 117], [30, 137], [35, 152], [40, 168], [45, 184], [50, 200], [60, 216]];
for (const f of document.querySelectorAll('.fader')) {
  let s = '';
  for (const y of long) s += rect(6, y, 18, 1, '#a0a0a0');
  for (const y of short) s += rect(18, y, 6, 1, '#888');
  s += rect(6, 56, 18, 2, '#fff') + rect(26, 0, 3, 219, '#262626');
  for (let y = 2; y < 217; y += 4) s += rect(70, y, 2, 1, '#999');
  for (const [n, y] of scale) s += `<text x="65" y="${y + 4}">${n}</text>` + rect(67, y, 5, 1, '#bbb');
  s += rect(72, 0, 8, 219, '#2f3632') + rect(72, 0, 8, 68, '#39362b') + rect(72, 0, 8, 16, f.dataset.tip);
  f.innerHTML = `<svg width="110" height="219" viewBox="0 0 110 219">${s}</svg>` +
    `<input type="range" min="0" max="100" value="${f.dataset.level}" aria-label="${f.dataset.name}">`;
}
```
